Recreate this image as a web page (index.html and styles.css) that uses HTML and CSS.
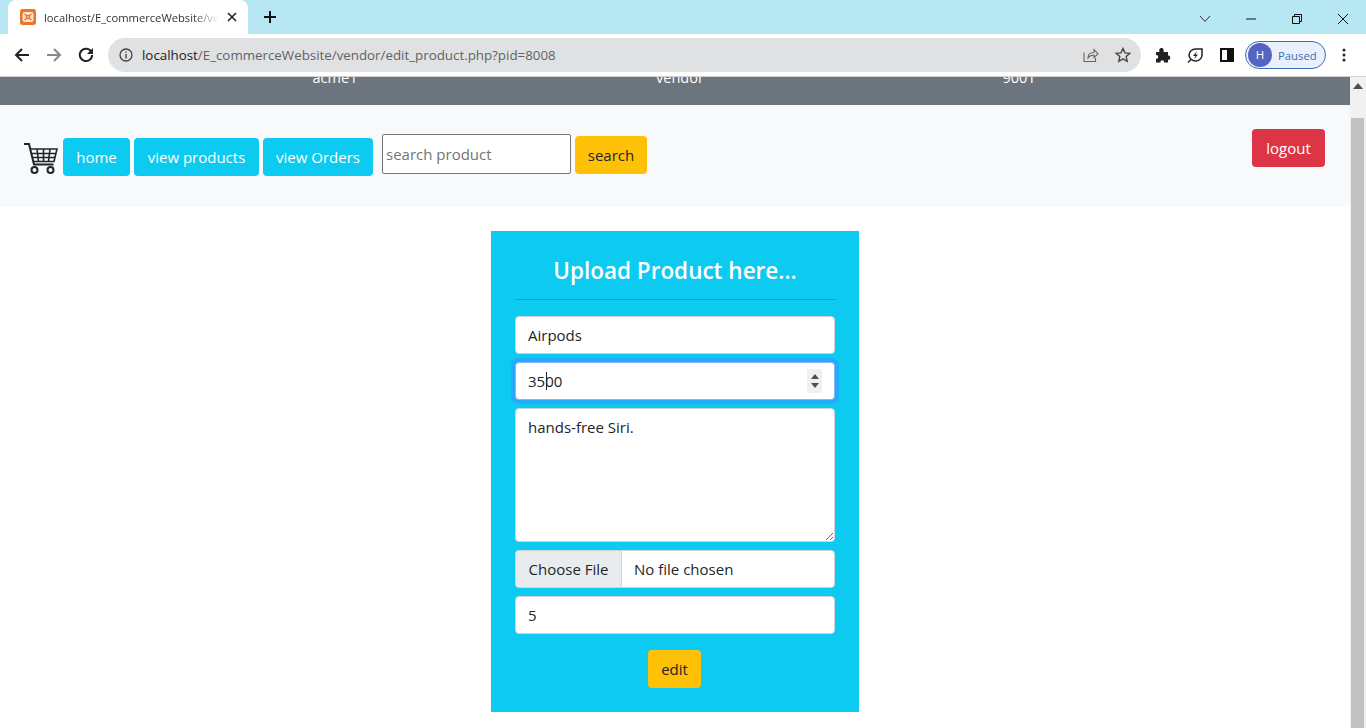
FILE: index.html
```html
<!DOCTYPE html>
<html lang="en">
<head>
    <meta charset="UTF-8">
    <meta name="viewport" content="width=device-width, initial-scale=1.0">
    <title>Edit Product</title>
    <link rel="stylesheet" href="styles.css">
</head>
<body>
    <div class="tab-strip">
        <div class="tab">
            <svg class="favicon" width="16" height="16" viewBox="0 0 16 16"><rect width="16" height="16" rx="2.500" fill="#e8762d"/><rect x="2.500" y="3" width="11" height="10" rx="2.500" fill="#fbe3d2"/><path d="M4.500 5l2 1.500h3l2-1.500M4.500 11l2-1.500h3l2 1.500M6.500 6.500v3M9.500 6.500v3" fill="none" stroke="#e8762d" stroke-width="1.500"/></svg>
            <span class="tab-title">localhost/E_commerceWebsite/ve</span>
            <svg class="tab-close" width="10" height="10" viewBox="0 0 10 10"><path d="M1 1l8 8M9 1l-8 8" stroke="#222" stroke-width="1.600"/></svg>
        </div>
        <svg class="new-tab" width="14" height="14" viewBox="0 0 14 14"><path d="M7 1v12M1 7h12" stroke="#111" stroke-width="2"/></svg>
        <div class="window-btns">
            <svg width="12" height="8" viewBox="0 0 12 8"><path d="M1 1l5 5.500 5-5.500" fill="none" stroke="#333" stroke-width="1"/></svg>
            <svg width="12" height="2" viewBox="0 0 12 2"><path d="M1 1h10" stroke="#111" stroke-width="1"/></svg>
            <svg width="12" height="12" viewBox="0 0 12 12"><path d="M1.500 3.500h7v7h-7zM3.500 3.500v-2h7v7h-2" fill="none" stroke="#111" stroke-width="1"/></svg>
            <svg width="12" height="12" viewBox="0 0 12 12"><path d="M1 1l10 10M11 1l-10 10" stroke="#111" stroke-width="1"/></svg>
        </div>
    </div>
    <div class="toolbar">
        <svg class="tool-back" width="16" height="16" viewBox="0 0 16 16"><path d="M15 8H2M8 2L2 8l6 6" fill="none" stroke="#222" stroke-width="2"/></svg>
        <svg class="tool-forward" width="16" height="16" viewBox="0 0 16 16"><path d="M1 8h13M8 2l6 6-6 6" fill="none" stroke="#888" stroke-width="2"/></svg>
        <svg class="tool-reload" width="16" height="16" viewBox="0 0 16 16"><path d="M13.500 5A6.200 6.200 0 1 0 14.200 8" fill="none" stroke="#222" stroke-width="2"/><path d="M15 1v6H9z" fill="#222"/></svg>
        <div class="omnibox">
            <svg width="16" height="16" viewBox="0 0 16 16"><circle cx="8" cy="8" r="6" fill="none" stroke="#444" stroke-width="1.300"/><path d="M8 7v4.500M8 4.500v1.300" stroke="#444" stroke-width="1.400"/></svg>
            <span class="url"><b>localhost</b>/E_commerceWebsite/vendor/edit_product.php?pid=8008</span>
            <svg class="omni-share" width="16" height="16" viewBox="0 0 16 16"><path d="M1 5.500v9h11.500V11M5 11c0-4 3-5.500 6-5.500V2.500l4 4.200-4 4V8c-2.500 0-4.500 1-6 3z" fill="none" stroke="#666" stroke-width="1.100"/></svg>
            <svg width="16" height="16" viewBox="0 0 16 16"><path d="M8 1.500l2 4.400 4.700.5-3.500 3.200 1 4.700L8 11.900l-4.200 2.400 1-4.700L1.300 6.400 6 5.900z" fill="none" stroke="#444" stroke-width="1.400"/></svg>
        </div>
        <svg class="ext-puzzle" width="16" height="16" viewBox="0 0 16 16"><path d="M1 5h3.500c-.8-3 .5-4 2-4s2.800 1 2 4H13v3.500c3-.8 3 5 0 4.200V15.500H9c.5-3-4-3-3.500 0H1v-3.800c3 .5 3-4.200 0-3.700z" fill="#222"/></svg>
        <svg class="ext-leaf" width="16" height="16" viewBox="0 0 16 16"><path d="M8.500 2H15v6.500a6.500 6 0 1 1-6.500-6.500z" fill="none" stroke="#222" stroke-width="1.500"/><path d="M10 4L6 9h2.500L7 12.500 11 7.500H8.500z" fill="#222"/><path d="M1 15.500l3-3" stroke="#222" stroke-width="1.400"/></svg>
        <svg class="side-panel" width="14" height="14" viewBox="0 0 14 14"><rect x="1" y="1" width="12" height="12" fill="#fff" stroke="#111" stroke-width="2"/><rect x="7" y="1" width="6" height="12" fill="#111"/></svg>
        <div class="profile">
            <span class="avatar">H</span>
            <span class="paused">Paused</span>
        </div>
        <svg class="kebab" width="4" height="14" viewBox="0 0 4 14"><circle cx="2" cy="2" r="1.500" fill="#222"/><circle cx="2" cy="7" r="1.500" fill="#222"/><circle cx="2" cy="12" r="1.500" fill="#222"/></svg>
    </div>

    <div class="viewport">
        <main class="page">
            <div class="info-bar">
                <span>acme1</span>
                <span>vendor</span>
                <span>9001</span>
            </div>
            <nav class="navbar">
                <svg class="cart" width="34" height="32" viewBox="0 0 34 32">
                    <path d="M0 1h5l5 20.500h19.500" fill="none" stroke="#212529" stroke-width="2"/>
                    <path d="M6.500 6h26.500l-3 12.500H9.500M8 10.500h24M9 14.500h22M13 6l1.500 12.500M19.500 6v12.500M26 6l-1.500 12.500" fill="none" stroke="#212529" stroke-width="1.600"/>
                    <circle cx="10.500" cy="27" r="3" fill="none" stroke="#212529" stroke-width="2"/>
                    <circle cx="26.500" cy="27" r="3" fill="none" stroke="#212529" stroke-width="2"/>
                </svg>
                <a class="btn btn-info nav-home" href="#">home</a>
                <a class="btn btn-info nav-products" href="#">view products</a>
                <a class="btn btn-info nav-orders" href="#">view Orders</a>
                <form class="search-form">
                    <input class="search-input" type="text" placeholder="search product">
                    <button class="btn btn-warning search-btn" type="button">search</button>
                </form>
                <a class="btn btn-danger logout" href="#">logout</a>
            </nav>
            <section class="content">
                <form class="upload-form">
                    <h3>Upload Product here...</h3>
                    <hr>
                    <input class="field" type="text" value="Airpods">
                    <div class="price-wrap">
                        <input class="field field-focus" type="number" value="3500">
                        <span class="caret"></span>
                        <span class="spinner">
                            <svg width="8" height="5" viewBox="0 0 8 5"><path d="M4 0l4 5H0z" fill="#505050"/></svg>
                            <svg width="8" height="5" viewBox="0 0 8 5"><path d="M4 5l4-5H0z" fill="#505050"/></svg>
                        </span>
                    </div>
                    <textarea class="field field-area">hands-free Siri.</textarea>
                    <input class="field field-file" type="file">
                    <input class="field" type="text" value="5">
                    <button class="btn btn-warning edit-btn" type="button">edit</button>
                </form>
            </section>
        </main>
        <div class="scrollbar">
            <svg class="scroll-up" width="10" height="6" viewBox="0 0 10 6"><path d="M5 0l5 6H0z" fill="#505050"/></svg>
            <div class="scroll-thumb"></div>
        </div>
    </div>
</body>
</html>
```

FILE: styles.css
```css
* {
    box-sizing: border-box;
}
body {
    margin: 0;
    height: 728px;
    overflow: hidden;
    font-family: "Open Sans", "Noto Sans", Arial, sans-serif;
    color: #212529;
    background: #fff;
}

/* browser chrome */
.tab-strip {
    display: flex;
    align-items: flex-end;
    height: 34px;
    padding-left: 8px;
    background: #b6e7f2;
}
.tab {
    display: flex;
    align-items: center;
    width: 240px;
    height: 34px;
    padding: 0 11px 0 12px;
    background: #fff;
    border-radius: 8px 8px 0 0;
}
.favicon {
    flex: none;
}
.tab-title {
    flex: 1;
    margin-left: 8px;
    white-space: nowrap;
    font-size: 11.200px;
    color: #333;
    -webkit-mask-image: linear-gradient(to right, #000 85%, transparent);
    mask-image: linear-gradient(to right, #000 85%, transparent);
}
.tab-close {
    flex: none;
    margin-left: 8px;
}
.new-tab {
    margin: 0 0 10px 15px;
}
.window-btns {
    display: flex;
    align-items: center;
    gap: 34px;
    height: 30px;
    margin-left: auto;
    padding-right: 17px;
}
.toolbar {
    display: flex;
    align-items: center;
    height: 43px;
    padding: 0 19px 0 14px;
    border-bottom: 1px solid #cfd1d3;
}
.tool-forward {
    margin-left: 16px;
}
.tool-reload {
    margin-left: 16px;
}
.omnibox {
    display: flex;
    align-items: center;
    width: 1033px;
    height: 34px;
    margin: 0 14px 0 14px;
    padding: 0 10px;
    background: #dfe1e3;
    border-radius: 17px;
}
.url {
    margin-left: 8px;
    font-size: 13.330px;
    color: #5f6368;
}
.url b {
    font-weight: 400;
    color: #202124;
}
.omni-share {
    margin-left: auto;
    margin-right: 16px;
}
.ext-leaf {
    margin-left: 16px;
}
.side-panel {
    margin-left: 17px;
}
.profile {
    display: flex;
    align-items: center;
    width: 81px;
    height: 28px;
    margin-left: 11px;
    padding-left: 2px;
    background: #e9effb;
    border: 1px solid #3b6fb5;
    border-radius: 14px;
}
.avatar {
    width: 24px;
    height: 24px;
    border-radius: 50%;
    background: #5563c1;
    color: #fff;
    font-size: 11.500px;
    line-height: 24px;
    text-align: center;
}
.paused {
    margin-left: 6px;
    font-size: 11.300px;
    color: #3b6fb5;
}
.kebab {
    margin-left: 16px;
}

/* page area */
.viewport {
    display: flex;
    height: 651px;
}
.page {
    flex: 1;
    min-width: 0;
    overflow: hidden;
}
.scrollbar {
    display: flex;
    flex-direction: column;
    align-items: center;
    width: 16px;
    padding: 0 2px 0 1px;
    background: #f1f1f1;
}
.scroll-up {
    margin-top: 6px;
}
.scroll-thumb {
    flex: 1;
    align-self: stretch;
    margin-top: 29px;
    background: #c1c1c1;
}

.info-bar {
    display: grid;
    grid-template-columns: 346px 344px 334px;
    grid-template-rows: 13px;
    align-items: end;
    height: 28px;
    padding: 0 0 15px 162px;
    overflow: hidden;
    background: #6c757d;
    color: #fff;
    text-align: center;
    font-size: 14.500px;
    line-height: 24px;
}

.navbar {
    display: flex;
    align-items: center;
    height: 102px;
    padding-left: 24px;
    background: #f8f9fa;
}
.cart {
    margin: 5px 5px 0 0;
}
.btn {
    display: inline-block;
    height: 38px;
    padding: 0;
    border: 1px solid transparent;
    border-radius: 4px;
    font-family: inherit;
    font-size: 15px;
    line-height: 36px;
    text-align: center;
    text-decoration: none;
}
.btn-info {
    background: #0dcaf0;
    color: #fff;
}
.btn-warning {
    background: #ffc107;
    color: #212529;
}
.btn-danger {
    background: #dc3545;
    color: #fff;
}
.nav-home {
    width: 67px;
    margin-top: 2px;
}
.nav-products {
    width: 125px;
    margin: 2px 0 0 4px;
}
.nav-orders {
    width: 110px;
    margin: 2px 0 0 4px;
}
.search-form {
    display: flex;
    align-items: center;
    margin: 0 0 4px 9px;
}
.search-input {
    width: 189px;
    height: 40px;
    padding: 0 3px;
    border: 1px solid #767676;
    border-radius: 2px;
    font-family: inherit;
    font-size: 15px;
}
.search-btn {
    width: 72px;
    margin: 2px 0 0 4px;
}
.logout {
    width: 73px;
    margin: -16px 25px 0 auto;
}

.content {
    display: flex;
    justify-content: center;
    padding-top: 24px;
}
.upload-form {
    display: flex;
    flex-direction: column;
    align-items: stretch;
    gap: 8px;
    width: 368px;
    height: 481px;
    padding: 24px;
    background: #0dcaf0;
}
.upload-form h3 {
    margin: 0;
    height: 32px;
    color: #fff;
    font-size: 22.500px;
    font-weight: 600;
    line-height: 31px;
    text-align: center;
}
.upload-form hr {
    width: 100%;
    height: 1px;
    margin: 4px 0 8px;
    border: 0;
    background: #0aa6c8;
}
.field {
    flex: none;
    width: 100%;
    height: 38px;
    padding: 6px 12px;
    background: #fff;
    border: 1px solid #ced4da;
    border-radius: 4px;
    font-family: inherit;
    font-size: 15px;
    line-height: 24px;
    color: #212529;
}
.price-wrap {
    position: relative;
    flex: none;
}
.field-focus {
    display: block;
    border-color: #86b7fe;
    outline: none;
    box-shadow: 0 0 0 4px #25abf9;
    caret-color: transparent;
}
.field-focus::-webkit-inner-spin-button {
    -webkit-appearance: none;
    margin: 0;
}
.caret {
    position: absolute;
    left: 31px;
    top: 10px;
    width: 1px;
    height: 18px;
    background: #212529;
}
.spinner {
    position: absolute;
    left: 292px;
    top: 7px;
    display: flex;
    flex-direction: column;
    align-items: center;
    justify-content: center;
    gap: 4px;
    width: 15px;
    height: 24px;
    background: #f0f0f0;
}
.field-area {
    height: 134px;
    resize: vertical;
}
.field-file {
    padding: 0 12px 0 0;
    line-height: 36px;
    overflow: hidden;
}
.field-file::file-selector-button {
    width: 106px;
    height: 36px;
    margin: 0 12px 0 0;
    padding: 0;
    border: 0;
    border-right: 1px solid #ced4da;
    border-radius: 0;
    background: #e9ecef;
    color: #212529;
    font-family: inherit;
    font-size: 15px;
}
.edit-btn {
    flex: none;
    width: 53px;
    margin: 8px 1px 0 0;
    align-self: center;
}
```
